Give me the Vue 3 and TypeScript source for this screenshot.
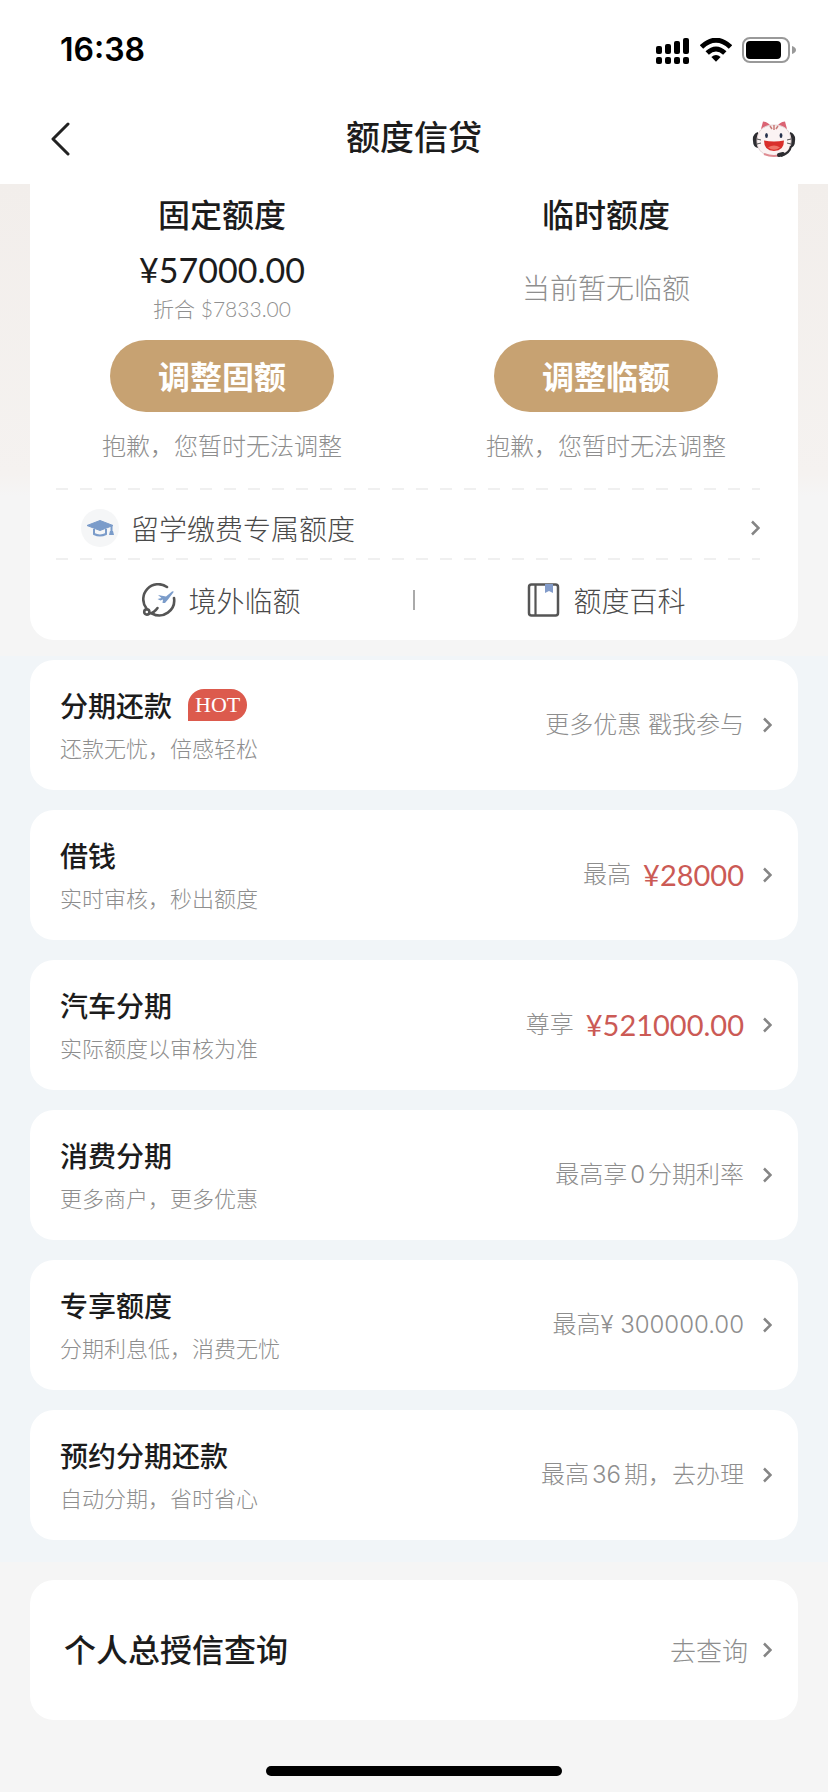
<script setup lang="ts">
interface Quota {
  title: string
  amount?: string
  converted?: string
  currency?: string
  empty?: string
  action: string
  note: string
}

interface Offer {
  title: string
  sub: string
  hint: string
  price?: string
  hot?: boolean
}

const quotas: Quota[] = [
  { title: '固定额度', amount: '¥57000.00', converted: '$7833.00', currency: '折合', action: '调整固额', note: '抱歉，您暂时无法调整' },
  { title: '临时额度', empty: '当前暂无临额', action: '调整临额', note: '抱歉，您暂时无法调整' },
]

const offers: Offer[] = [
  { title: '分期还款', sub: '还款无忧，倍感轻松', hint: '更多优惠 戳我参与', hot: true },
  { title: '借钱', sub: '实时审核，秒出额度', hint: '最高', price: '¥28000' },
  { title: '汽车分期', sub: '实际额度以审核为准', hint: '尊享', price: '¥521000.00' },
  { title: '消费分期', sub: '更多商户，更多优惠', hint: '最高享0分期利率' },
  { title: '专享额度', sub: '分期利息低，消费无忧', hint: '最高¥ 300000.00' },
  { title: '预约分期还款', sub: '自动分期，省时省心', hint: '最高36期，去办理' },
]
</script>

<template>
  <div class="page">
    <header class="header">
      <div class="status">
        <time class="clock">16:38</time>
        <div class="status-icons">
          <svg width="34" height="28" viewBox="0 0 34 28" aria-hidden="true">
            <rect x="0" y="10" width="6" height="8" rx="2" />
            <rect x="9" y="8" width="6" height="10" rx="2" />
            <rect x="18" y="5" width="6" height="13" rx="2" />
            <rect x="27" y="2" width="6" height="16" rx="2" />
            <rect x="0" y="21" width="6" height="7" rx="2" />
            <rect x="9" y="21" width="6" height="7" rx="2" />
            <rect x="18" y="21" width="6" height="7" rx="2" />
            <rect x="27" y="21" width="6" height="7" rx="2" />
          </svg>
          <svg width="32" height="24" viewBox="0 0 32 24" aria-hidden="true">
            <path d="M1.500 9Q16 -4.500 30.500 9" fill="none" stroke="#000" stroke-width="5" />
            <path d="M7.200 15Q16 7 24.800 15" fill="none" stroke="#000" stroke-width="5" />
            <path d="M11.400 18.900Q16 15 20.600 18.900L16 23.700Z" />
          </svg>
          <svg width="54" height="26" viewBox="0 0 54 26" aria-hidden="true">
            <rect x="1" y="1" width="46" height="24" rx="7" fill="none" stroke="#999" stroke-width="2" />
            <rect x="4" y="4" width="35" height="18" rx="4" />
            <path d="M50 9q4 1.500 4 4t-4 4z" fill="#999" />
          </svg>
        </div>
      </div>
      <nav class="nav">
        <button class="icon-button back" type="button" aria-label="返回">
          <svg width="20" height="34" viewBox="0 0 20 34" aria-hidden="true">
            <path d="M18 2L3 17L18 32" fill="none" stroke="#222" stroke-width="3" stroke-linecap="round" stroke-linejoin="round" />
          </svg>
        </button>
        <h1 class="nav-title">额度信贷</h1>
        <button class="icon-button service" type="button" aria-label="客服">
          <svg width="44" height="38" viewBox="0 0 44 38" aria-hidden="true">
            <path d="M9 9L11 1.500Q17 2 19 7zM35 9L33 1.500Q27 2 25 7z" fill="#db6474" />
            <path d="M6 12Q0 14 1 21Q1 27 6 28zM38 12Q44 14 43 21Q43 27 38 28z" fill="#2d2d31" />
            <path d="M22 5C9 5 5 13 5 21C5 31 12 36 22 36S39 31 39 21C39 13 35 5 22 5Z" fill="#fbf3f3" stroke="#e3d3d5" stroke-width="1" />
            <path d="M18 6l2 3M22 5v5M26 6l-2 3" stroke="#c97b78" stroke-width="1.500" />
            <path d="M12 34Q22 38 32 34" fill="none" stroke="#df8c92" stroke-width="2" />
            <ellipse cx="14.500" cy="15.500" rx="1.400" ry="2.500" fill="#27324c" />
            <ellipse cx="29" cy="15.500" rx="1.400" ry="2.500" fill="#27324c" />
            <path d="M12 20.500Q22 22.500 32 20.500Q32 31 22 31T12 20.500Z" fill="#d92f2c" />
            <path d="M16 27.500Q22 23.500 28 27.500Q22 32 16 27.500Z" fill="#ef7468" />
            <path d="M5 19l4 1M5 24l4-1M39 19l-4 1M39 24l-4-1" stroke="#555" stroke-width="1" />
            <path d="M39 26Q38 33 29 36" fill="none" stroke="#2d2d31" stroke-width="2" />
            <path d="M27 35l4-1" stroke="#2d2d31" stroke-width="4" stroke-linecap="round" />
          </svg>
        </button>
      </nav>
    </header>

    <main>
      <section class="quota-area">
        <div class="quota-card">
          <div class="quotas">
            <div v-for="q in quotas" :key="q.title" class="quota">
              <h2 class="quota-title">{{ q.title }}</h2>
              <div class="quota-value">
                <template v-if="q.amount">
                  <strong class="amount">{{ q.amount }}</strong>
                  <span class="converted">{{ q.currency }} {{ q.converted }}</span>
                </template>
                <span v-else class="empty">{{ q.empty }}</span>
              </div>
              <button class="adjust" type="button">{{ q.action }}</button>
              <p class="note">{{ q.note }}</p>
            </div>
          </div>
          <div class="study">
            <svg class="dash" width="100%" height="2" aria-hidden="true">
              <line x1="0" y1="1" x2="100%" y2="1" stroke="#f0f0f0" stroke-width="2" stroke-dasharray="12 12" />
            </svg>
            <a class="study-link" href="#study">
              <svg width="38" height="38" viewBox="0 0 38 38" aria-hidden="true">
                <circle cx="19" cy="19" r="19" fill="#f5f6f7" />
                <path d="M6 16.500L19 11.500L32 16.500L19 21.500Z" fill="#7b9cca" stroke="#7b9cca" stroke-linejoin="round" />
                <path d="M13 20v5q6 3 12 0v-5M30.500 17v7" fill="none" stroke="#7b9cca" stroke-width="2" />
                <path d="M29 22h3l1 4h-5z" fill="#7b9cca" />
              </svg>
              <span>留学缴费专属额度</span>
              <svg class="chevron" width="10" height="16" viewBox="0 0 10 16" aria-hidden="true"><path d="M2 1.500L8.500 8L2 14.500" /></svg>
            </a>
            <svg class="dash" width="100%" height="2" aria-hidden="true">
              <line x1="0" y1="1" x2="100%" y2="1" stroke="#f0f0f0" stroke-width="2" stroke-dasharray="12 12" />
            </svg>
          </div>
          <div class="shortcuts">
            <a class="shortcut" href="#overseas">
              <svg width="34" height="34" viewBox="0 0 34 34" aria-hidden="true">
                <g fill="none" stroke="#555" stroke-width="2.600" stroke-linecap="round">
                  <path d="M25 4A15 15 0 0 0 4.500 25.500" />
                  <path d="M32 15A15 15 0 0 1 10 30.500" />
                  <circle cx="4.800" cy="29" r="2.600" />
                  <path d="M7.500 30.500Q12 30 15.500 25" />
                </g>
                <path d="M16 12l8 1.500l6-5q2-1 1.500 .8l-5.500 7.200l-3 3.500h-2.500l.5-3.500l-2.500 1l-3-1.500l4-1z" fill="#7b9cca" />
              </svg>
              <span>境外临额</span>
            </a>
            <i class="divider"></i>
            <a class="shortcut" href="#wiki">
              <svg width="34" height="34" viewBox="0 0 34 34" aria-hidden="true">
                <rect x="2" y="1.500" width="29" height="31" rx="2.500" fill="none" stroke="#555" stroke-width="2.500" />
                <path d="M8.500 2v30" stroke="#555" stroke-width="2.200" />
                <path d="M18 1h8v9l-4-2l-4 2z" fill="#839cca" />
              </svg>
              <span>额度百科</span>
            </a>
          </div>
        </div>
      </section>

      <section class="offers">
        <a v-for="o in offers" :key="o.title" class="offer" href="#offer">
          <div class="offer-text">
            <h3 class="offer-title">{{ o.title }}<span v-if="o.hot" class="hot">HOT</span></h3>
            <p class="offer-sub">{{ o.sub }}</p>
          </div>
          <span class="hint">{{ o.hint }}</span>
          <span v-if="o.price" class="price">{{ o.price }}</span>
          <svg class="chevron" width="10" height="16" viewBox="0 0 10 16" aria-hidden="true"><path d="M2 1.500L8.500 8L2 14.500" /></svg>
        </a>
      </section>

      <section class="query-area">
        <a class="query" href="#query">
          <h2 class="query-title">个人总授信查询</h2>
          <span class="query-hint">去查询</span>
          <svg class="chevron" width="10" height="16" viewBox="0 0 10 16" aria-hidden="true"><path d="M2 1.500L8.500 8L2 14.500" /></svg>
        </a>
      </section>
    </main>
    <div class="home-indicator"></div>
  </div>
</template>

<style>
body {
  margin: 0;
  background: #f5f5f5;
}
</style>

<style scoped>
.page {
  min-height: 100vh;
  box-sizing: border-box;
  padding-bottom: 16px;
  background: #f5f5f5;
  color: #1c1c1c;
  font-family: "Noto Sans CJK SC", sans-serif;
}
h1, h2, h3, p {
  margin: 0;
  font-weight: 500;
}
a {
  color: inherit;
  text-decoration: none;
}
button {
  border: 0;
  padding: 0;
  font-family: inherit;
  cursor: pointer;
}
svg {
  display: block;
  flex: none;
}
.header {
  background: #fff;
}
.status {
  display: flex;
  align-items: center;
  justify-content: space-between;
  height: 100px;
  padding: 0 32px 0 60px;
}
.clock {
  color: #000;
  font: 600 32px/40px Inter, sans-serif;
}
.status-icons {
  display: flex;
  align-items: center;
  gap: 10px;
}
.nav {
  display: grid;
  grid-template-columns: 1fr auto 1fr;
  align-items: center;
  height: 84px;
  padding: 0 32px 6px;
  box-sizing: border-box;
}
.nav-title {
  padding-bottom: 6px;
  font-size: 34px;
  line-height: 40px;
}
.icon-button {
  display: flex;
  background: none;
}
.back {
  justify-self: start;
  padding: 0 18px;
}
.service {
  justify-self: end;
}
.quota-area {
  padding: 0 30px 16px;
  background: linear-gradient(#f2eeeb, #f5f2f0 290px, #f5f5f5 312px);
}
.quota-card {
  border-radius: 0 0 24px 24px;
  background: #fff;
}
.quotas {
  display: grid;
  grid-template-columns: 1fr 1fr;
  padding: 8px 0 26px;
}
.quota {
  display: flex;
  flex-direction: column;
  align-items: center;
}
.quota-title {
  font-size: 32px;
  line-height: 42px;
}
.quota-value {
  display: flex;
  flex-direction: column;
  align-items: center;
  justify-content: center;
  height: 106px;
}
.amount {
  font: 400 34px/44px Lato, sans-serif;
}
.converted {
  color: #909090;
  font: 300 21px/34px Lato, "Noto Sans CJK SC", sans-serif;
}
.empty {
  color: #8e8e8e;
  font-size: 28px;
  font-weight: 300;
  line-height: 40px;
}
.adjust {
  width: 224px;
  height: 72px;
  padding-bottom: 2px;
  border-radius: 36px;
  background: #c7a272;
  color: #fff;
  font-size: 32px;
  font-weight: 700;
}
.note {
  margin-top: 16px;
  color: #8e8e8e;
  font-size: 24px;
  font-weight: 300;
  line-height: 34px;
}
.study {
  padding: 0 38px 0 26px;
}
.study-link {
  display: flex;
  align-items: center;
  gap: 12px;
  height: 60px;
  padding: 8px 0 0 25px;
  color: #4a4a4a;
  font-size: 28px;
  font-weight: 300;
  line-height: 40px;
}
.chevron {
  margin-left: auto;
  fill: none;
  stroke: #858585;
  stroke-width: 2.5px;
}
.shortcuts {
  display: flex;
  align-items: center;
  height: 80px;
}
.shortcut {
  flex: 1;
  display: flex;
  align-items: center;
  justify-content: center;
  gap: 12px;
  color: #4a4a4a;
  font-size: 28px;
  font-weight: 300;
}
.divider {
  width: 2px;
  height: 20px;
  background: #aaa;
}
.offers {
  display: grid;
  gap: 20px;
  padding: 4px 30px 22px;
  background: #f1f5f8;
}
.offer {
  display: flex;
  align-items: center;
  height: 130px;
  padding: 0 26px 0 30px;
  border-radius: 24px;
  background: #fff;
}
.offer-text {
  flex: 1;
  padding-top: 2px;
}
.offer-title {
  display: flex;
  align-items: center;
  gap: 16px;
  font-size: 28px;
  line-height: 42px;
}
.hot {
  padding: 0 7px;
  border-radius: 16px 16px 16px 0;
  background: #dc5a4d;
  color: #fff;
  font: 400 22px/32px "Liberation Serif", serif;
}
.offer-sub {
  color: #8e8e8e;
  font-size: 22px;
  font-weight: 300;
  line-height: 42px;
}
.hint {
  color: #8e8e8e;
  font: 300 24px/36px Inter, "Noto Sans CJK SC", sans-serif;
  text-autospace: normal;
}
.price {
  margin-left: 12px;
  color: #cb5a55;
  font: 400 29px/40px Lato, sans-serif;
}
.offer .chevron {
  margin-left: 18px;
}
.query-area {
  padding: 18px 30px 46px;
}
.query {
  display: flex;
  align-items: center;
  height: 140px;
  padding: 0 26px 0 34px;
  border-radius: 24px;
  background: #fff;
}
.query-title {
  flex: 1;
  padding-bottom: 4px;
  font-size: 32px;
}
.query-hint {
  padding-bottom: 2px;
  color: #8e8e8e;
  font-size: 26px;
  font-weight: 300;
}
.query .chevron {
  margin-left: 14px;
}
.home-indicator {
  width: 296px;
  height: 10px;
  margin: 0 auto;
  border-radius: 5px;
  background: #000;
}
</style>
